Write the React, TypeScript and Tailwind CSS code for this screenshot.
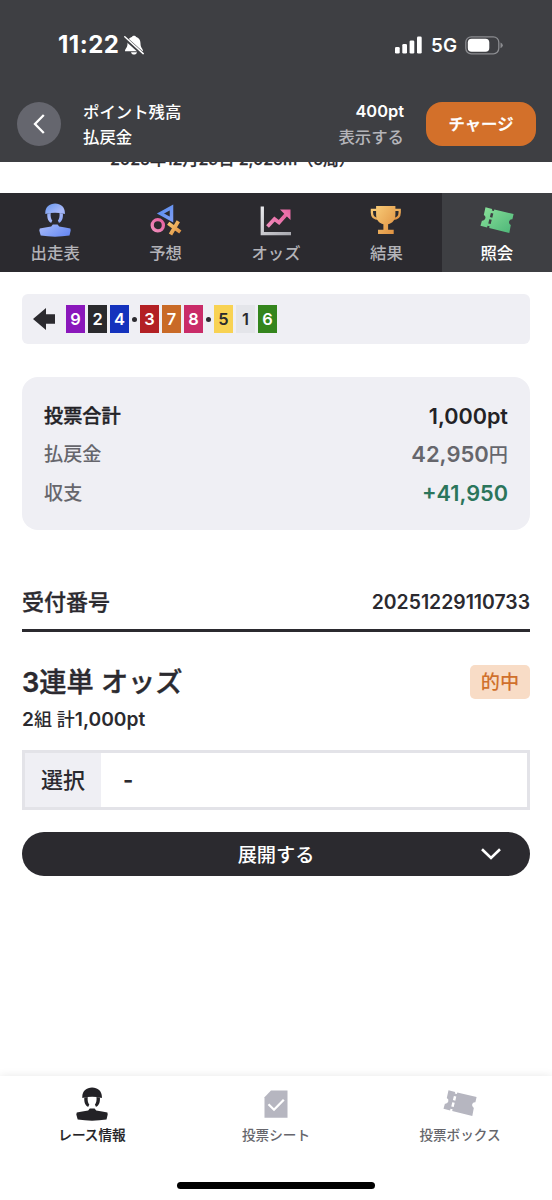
import React from 'react';
import { clsx } from 'clsx';

type IconProps = { className?: string; fill?: string };

const RiderIcon = ({ className, fill = 'currentColor' }: IconProps) => (
  <svg viewBox="0 0 32 34" className={className} fill={fill}>
    <path d="M6.300 10.900V9.800C6.300 4 10.500.5 16.100.5S25.900 4 25.900 9.800V10.900Q16 8.800 6.300 10.900Z" />
    <path d="M8.300 10.400C7.900 15.500 9.500 18.800 12.300 19.800L13.300 17.600C11.900 16 11.400 13.500 11.700 9.900ZM23.900 10.400C24.300 15.500 22.700 18.800 19.900 19.800L18.900 17.600C20.300 16 20.800 13.500 20.500 9.900Z" />
    <path d="M0.800 25.600Q6 24.400 12.200 23.500L13.800 21.600H18.600L20.200 23.500Q26.500 24.400 31.400 25.600L31.700 27.500L30.500 32.500Q16 34.800 1.700 32.500L0.300 27.500Z" />
  </svg>
);

const TicketIcon = ({ className, fill = 'currentColor' }: IconProps) => (
  <svg viewBox="0 0 34 28" className={className} fill={fill}>
    <path d="M5.500 1.200L12.200 2.900L11.800 4.600L13.900 5.100L14.300 3.400L33.600 8.100L32.400 13.200A3 3 0 0 0 30.800 18.900L29.300 27L9.200 21.900L9.600 20.300L7.500 19.800L7.100 21.400L0.500 19.800L1.900 14.700A3.100 3.100 0 0 0 3.800 8.900Z" />
    <path d="M12.100 7.200L11.100 11.400M10.500 13.500L9.500 17.700" className="stroke-[var(--cut)]" strokeWidth="2.500" />
  </svg>
);

const MarksIcon = () => (
  <svg viewBox="0 0 32 34" className="h-[34px] w-8" fill="none">
    <path d="M10.500 10.500L21.500 4.500V16.500Z" stroke="url(#blue)" strokeWidth="3.500" />
    <circle cx="7.800" cy="22.300" r="5.600" stroke="url(#pink)" strokeWidth="3.300" />
    <path d="M18.200 20.200L30.300 29M28.300 18.300L20.500 31.500" stroke="url(#gold)" strokeWidth="3.800" />
  </svg>
);

const OddsIcon = () => (
  <svg viewBox="0 0 32 34" className="h-[34px] w-8" fill="none">
    <path d="M2.300 3.500V30.700H31" stroke="url(#silver)" strokeWidth="3.300" />
    <path d="M7.500 23.500L14.500 16L19 19.500L27 10.500" stroke="url(#pink)" strokeWidth="3.800" />
    <path d="M20 6.500H30.500V17Z" fill="url(#pink)" />
  </svg>
);

const TrophyIcon = () => (
  <svg viewBox="0 0 32 34" className="h-[34px] w-8" fill="none">
    <path d="M7 6.800H1.900V9.500C1.900 13.500 4.500 15.900 9 15.900M24.500 6.800H29.700V9.500C29.700 13.500 27 15.900 22.600 15.900" stroke="url(#gold)" strokeWidth="2.300" />
    <path d="M6.100 3H25.400V11.500C25.400 17 22.500 20.300 18.100 21.200V26.800H23.700V31H8V26.800H13.400V21.200C9 20.300 6.100 17 6.100 11.500Z" fill="url(#gold)" />
  </svg>
);

const SheetIcon = ({ className }: IconProps) => (
  <svg viewBox="0 0 24 28" className={className}>
    <path d="M7 0.500H23.500V27.800H0.500V7.200Z" fill="currentColor" />
    <path d="M4.500 14.300L10 19.700L19.800 9.700" fill="none" stroke="#fff" strokeWidth="2.300" />
  </svg>
);

const Gradients = () => (
  <svg className="absolute h-0 w-0" aria-hidden>
    <defs>
      <linearGradient id="blue" x1="0" y1="0" x2="1" y2="1">
        <stop stopColor="#5b8def" /><stop offset="1" stopColor="#7a9cf5" />
      </linearGradient>
      <linearGradient id="rider" gradientUnits="userSpaceOnUse" x1="4" y1="0" x2="28" y2="34">
        <stop stopColor="#5f93ee" /><stop offset=".4" stopColor="#a9b9f8" /><stop offset=".65" stopColor="#8aa5f6" /><stop offset="1" stopColor="#6687f3" />
      </linearGradient>
      <linearGradient id="pink" x1="0" y1="1" x2="1" y2="0">
        <stop stopColor="#f08fbd" /><stop offset="1" stopColor="#e75f9e" />
      </linearGradient>
      <linearGradient id="gold" x1="0" y1="0" x2="1" y2="1">
        <stop stopColor="#f8ca76" /><stop offset="1" stopColor="#df8f3f" />
      </linearGradient>
      <linearGradient id="silver" x1="0" y1="0" x2="1" y2="1">
        <stop stopColor="#e9e9ec" /><stop offset="1" stopColor="#a9a9b0" />
      </linearGradient>
      <linearGradient id="green" x1="0" y1="0" x2="1" y2="1">
        <stop stopColor="#8be29a" /><stop offset="1" stopColor="#4cb578" />
      </linearGradient>
    </defs>
  </svg>
);

const tabs = [
  { label: '出走表', icon: <RiderIcon className="h-[34px] w-8" fill="url(#rider)" /> },
  { label: '予想', icon: <MarksIcon /> },
  { label: 'オッズ', icon: <OddsIcon /> },
  { label: '結果', icon: <TrophyIcon /> },
  { label: '照会', icon: <TicketIcon className="mt-[3px] h-7 w-[34px] [--cut:#3e3f43]" fill="url(#green)" />, active: true },
];

const lineup = [
  [['9', 'bg-[#8a17bb] text-white'], ['2', 'bg-[#2a2a2d] text-white'], ['4', 'bg-[#1432bd] text-white']],
  [['3', 'bg-[#b32024] text-white'], ['7', 'bg-[#c96a27] text-white'], ['8', 'bg-[#c92b68] text-white']],
  [['5', 'bg-[#f8d253] text-[#2a2a2d]'], ['1', 'bg-[#e4e5ea] text-[#2a2a2d]'], ['6', 'bg-[#34851d] text-white']],
];

function StatusBar() {
  return (
    <div className="flex h-[101px] items-start justify-between pr-[49px] pl-[58px]">
      <div className="flex h-[90px] items-center gap-[5px]">
        <span className="w-[61px] text-[24px] font-bold tracking-[0.500px] whitespace-nowrap">11:22</span>
        <svg viewBox="0 0 20 20" className="h-5 w-5" fill="currentColor">
          <path d="M1 16.300C1 13.500 3.500 13 3.500 8.500C3.500 4.500 5.700 2.700 7.900 2.100C8.400.2 11.600.2 12.100 2.100C14.300 2.700 16.500 4.500 16.500 8.500C16.500 13 19 13.500 19 16.300ZM7 17.200H13C12.500 20.400 7.500 20.400 7 17.200Z" />
          <path d="M0 2.200L19 19.200" stroke="#3e3f43" strokeWidth="3.800" />
          <path d="M.8 1.800L19.200 18.600" stroke="currentColor" strokeWidth="1.500" strokeLinecap="round" />
        </svg>
      </div>
      <div className="flex h-[90px] items-center">
        <svg viewBox="0 0 27 18" className="h-[18px] w-[27px]" fill="currentColor">
          <rect y="11" width="4.700" height="6.500" rx="1.300" />
          <rect x="7.300" y="8" width="4.700" height="9.500" rx="1.300" />
          <rect x="14.600" y="4.500" width="4.700" height="13" rx="1.300" />
          <rect x="22" y=".5" width="4.700" height="17" rx="1.300" />
        </svg>
        <span className="mt-0.5 ml-[9px] text-[18.800px] font-semibold">5G</span>
        <svg viewBox="0 0 38 19" className="ml-2 h-[19px] w-[38px]">
          <rect x=".8" y=".8" width="33" height="17" rx="5.500" fill="none" stroke="#8b8c90" strokeWidth="1.300" />
          <rect x="2.800" y="2.800" width="21.500" height="13" rx="3.800" fill="#fff" />
          <path d="M35.500 6.500Q37.800 7.500 37.800 9.300T35.500 12.200Z" fill="#8b8c90" />
        </svg>
      </div>
    </div>
  );
}

function Header() {
  return (
    <header className="relative z-10 h-[162px] bg-[#3e3f43] text-white">
      <StatusBar />
      <div className="flex h-[45px] items-center pr-4 pl-[17px]">
        <button className="flex h-11 w-11 items-center justify-center rounded-full bg-[#65666e]">
          <svg viewBox="0 0 12 20" className="h-5 w-3" fill="none" stroke="currentColor" strokeWidth="2.300">
            <path d="M10.800 1L2 10L10.800 19" />
          </svg>
        </button>
        <div className="ml-[22px] flex flex-1 flex-col pt-0.5 text-[16.400px] leading-[24.500px] font-medium">
          <div className="flex justify-between"><span>ポイント残高</span><span className="-mt-px font-semibold">400pt</span></div>
          <div className="flex justify-between"><span>払戻金</span><span className="text-[#b5b5ba]">表示する</span></div>
        </div>
        <button className="ml-[22px] h-11 w-[110px] rounded-2xl bg-[#d3702a] pt-0.5 text-[16.400px] font-medium [-webkit-text-stroke:0.400px]">チャージ</button>
      </div>
    </header>
  );
}

export default function App(): React.JSX.Element {
  return (
    <div className="flex h-[1200px] w-[552px] flex-col overflow-hidden bg-white font-['Inter','Noto_Sans_CJK_JP',sans-serif] text-[#2b2a2f]" lang="ja">
      <Gradients />
      <Header />

      {/* race heading, mostly scrolled under the header */}
      <div className="h-[31px] pl-[110px]">
        <p className="-mt-[15px] text-[16px] leading-6 font-medium whitespace-nowrap [-webkit-text-stroke:0.300px]">2025年12月29日 2,025m（5周）</p>
      </div>

      <nav className="grid h-[79px] shrink-0 grid-cols-5 bg-[#2b2a2f]">
        {tabs.map(({ label, icon, active }) => (
          <div key={label} className={clsx('flex flex-col items-center pt-[10px]', active ? 'bg-[#3e3f43] text-white' : 'text-[#b3b3b8]')}>
            <div className="flex h-[38px] items-start">{icon}</div>
            <span className="text-[16.400px] leading-6 font-medium">{label}</span>
          </div>
        ))}
      </nav>

      <main className="flex flex-1 flex-col px-[22px] pt-[22px]">
        <div className="flex h-[50px] items-center rounded-md bg-[#efeff4] pl-[11px]">
          <svg viewBox="0 0 22 22" className="h-[22px] w-[22px]" fill="currentColor">
            <path d="M0 11L13 0V6.300H22V15.700H13V22Z" />
          </svg>
          <div className="ml-[11px] flex items-center gap-[3px]">
            {lineup.map((group, i) => (
              <React.Fragment key={i}>
                {i > 0 && <span className="h-[5px] w-[5px] rounded-full bg-[#2b2a2f]" />}
                {group.map(([num, color]) => (
                  <span key={num} className={clsx('flex h-7 w-[19px] items-center justify-center text-[16.400px] font-semibold', color)}>{num}</span>
                ))}
              </React.Fragment>
            ))}
          </div>
        </div>

        <section className="mt-[33px] flex h-[153px] flex-col rounded-2xl bg-[#efeff4] px-[22px] pt-[20px] text-[19.200px] leading-[38.400px] font-medium text-[#66666c]">
          <div className="flex h-[38.400px] justify-between text-[#232226]"><span className="[-webkit-text-stroke:0.400px]">投票合計</span><span className="text-[21.600px] font-semibold">1,000pt</span></div>
          <div className="flex h-[38.400px] justify-between"><span>払戻金</span><span><span className="text-[22px] font-semibold">42,950</span>円</span></div>
          <div className="flex h-[38.400px] justify-between"><span>収支</span><span className="text-[21.700px] font-semibold text-[#2b755b]">+41,950</span></div>
        </section>

        <div className="mt-[50px] flex h-[52px] items-start justify-between border-b-3 border-[#2b2a2f] pt-1.5 leading-8">
          <h2 className="text-[22px] font-medium [-webkit-text-stroke:0.300px]">受付番号</h2>
          <span className="text-[19.400px] font-semibold">20251229110733</span>
        </div>

        <section className="mt-[31px]">
          <div className="flex items-center justify-between">
            <h3 className="pt-0.5 text-[27.200px] leading-9 font-medium [-webkit-text-stroke:0.400px]"><span className="font-semibold">3</span>連単 オッズ</h3>
            <span className="flex h-[34px] w-[60px] items-center justify-center rounded-[5px] bg-[#f8dcc6] pt-px text-[19.200px] font-medium text-[#d0702c]">的中</span>
          </div>
          <p className="mt-[3px] text-[18px] leading-[30px] font-medium">
            <span className="text-[19.200px] font-semibold">2</span>組 計<span className="text-[19.200px] font-semibold">1,000pt</span>
          </p>
          <div className="mt-[15px] flex h-[60px] border-3 border-[#e3e3e8] text-[22px] font-medium">
            <div className="flex w-[76px] items-center justify-center bg-[#efeff4] pt-px">選択</div>
            <div className="flex items-center pl-[22px] font-bold">-</div>
          </div>
          <button className="mt-[22px] flex h-11 w-full items-center rounded-full bg-[#2b2a2f] pr-[29px] pl-[49px] text-[19.200px] font-medium text-white">
            <span className="flex-1 pt-0.5 text-center">展開する</span>
            <svg viewBox="0 0 20 12" className="h-3 w-5" fill="none" stroke="currentColor" strokeWidth="2.600">
              <path d="M1 1.200L10 10L19 1.200" />
            </svg>
          </button>
        </section>
      </main>

      <footer className="flex h-[124px] shrink-0 flex-col justify-between bg-white shadow-[0_-1px_8px_rgba(0,0,0,0.08)]">
        <div className="grid grid-cols-3 pt-3 text-[13.600px] leading-5 font-medium text-[#66666c]">
          <div className="flex flex-col items-center text-[#232226]">
            <RiderIcon className="mb-1 -mt-px h-[34px] w-8" />
            <span className="[-webkit-text-stroke:0.200px]">レース情報</span>
          </div>
          <div className="flex flex-col items-center">
            <SheetIcon className="mt-0.5 mb-[7px] h-7 w-6 text-[#b6b6c0]" />
            <span>投票シート</span>
          </div>
          <div className="flex flex-col items-center">
            <TicketIcon className="mt-px mb-2 h-7 w-[34px] text-[#b6b6c0] [--cut:#fff]" />
            <span>投票ボックス</span>
          </div>
        </div>
        <div className="mb-[11px] h-[7px] w-[198px] self-center rounded-full bg-black" />
      </footer>
    </div>
  );
}
